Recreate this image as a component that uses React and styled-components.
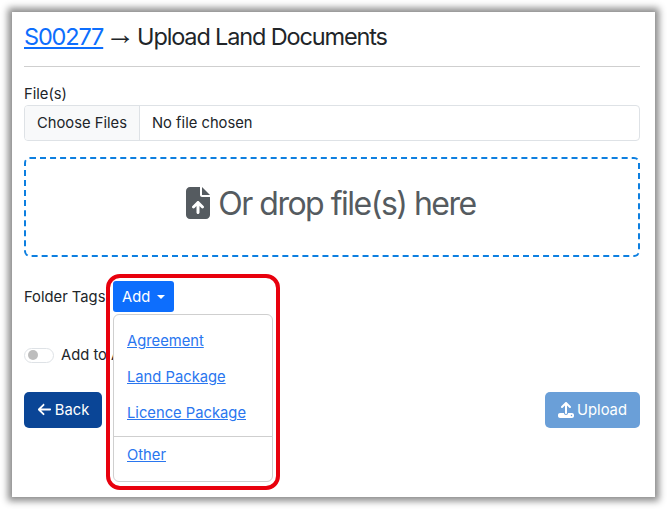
import React from 'react'
import styled, { createGlobalStyle } from 'styled-components'
import { FaArrowLeft, FaFileArrowUp, FaUpload } from 'react-icons/fa6'

const GlobalStyle = createGlobalStyle`
  html, body {
    margin: 0;
    background: #fff;
  }
  * {
    box-sizing: border-box;
  }
`

const App = () => {
  return (
    <Page>
      <GlobalStyle />
      <Panel>
        <Header>
          <TitleLink href="#">S00277</TitleLink>
          <Arrow>→</Arrow>
          Upload Land Documents
        </Header>
        <Body>
          <Label>File(s)</Label>
          <FileInput>
            <ChooseButton>Choose Files</ChooseButton>
            <FileName>No file chosen</FileName>
          </FileInput>
          <DropZone>
            <FaFileArrowUp size={32} />
            <span>Or drop file(s) here</span>
          </DropZone>
          <TagsRow>
            <TagsLabel>Folder Tags</TagsLabel>
            <AddMenu>
              <AddButton>
                Add
                <Caret />
              </AddButton>
              <Menu>
                <MenuLink href="#">Agreement</MenuLink>
                <MenuLink href="#">Land Package</MenuLink>
                <MenuLink href="#">Licence Package</MenuLink>
                <Divider />
                <MenuLink href="#">Other</MenuLink>
              </Menu>
              <Highlight />
            </AddMenu>
          </TagsRow>
          <SwitchRow>
            <Switch>
              <Knob />
            </Switch>
            <SwitchLabel>Add to A</SwitchLabel>
          </SwitchRow>
          <Actions>
            <BackButton>
              <FaArrowLeft size={15} />
              Back
            </BackButton>
            <UploadButton>
              <FaUpload size={16} />
              Upload
            </UploadButton>
          </Actions>
        </Body>
      </Panel>
    </Page>
  )
}

export default App

const Page = styled.div`
  width: 668px;
  height: 510px;
  padding: 12px 13px 13px 12px;
  font-family: Inter, "Liberation Sans", sans-serif;
  font-size: 14.75px;
  color: #212529;
  overflow: hidden;
`
const Panel = styled.div`
  width: 643px;
  height: 485px;
  background: #fff;
  box-shadow: 0 0 7px 4px #8a8a8a;
`
const Header = styled.div`
  height: 55px;
  margin: 0 15px 0 12px;
  padding-top: 10px;
  font-size: 23.5px;
  letter-spacing: -1.15px;
  line-height: 30px;
  border-bottom: 1px solid #cfcfcf;
`
const TitleLink = styled.a`
  color: #0d6efd;
  text-decoration: underline;
`
const Arrow = styled.span`
  margin: 0 3px 0 2px;
  font-family: "Liberation Serif", serif;
  font-size: 30px;
  line-height: 0;
  vertical-align: 1px;
`
const Body = styled.div`
  padding: 17px 15px 0 12px;
`
const Label = styled.div`
  height: 21px;
  line-height: 20px;
`
const FileInput = styled.div`
  display: flex;
  height: 36px;
  border: 1px solid #dee2e6;
  border-radius: 4px;
  overflow: hidden;
`
const ChooseButton = styled.div`
  display: flex;
  align-items: center;
  width: 115px;
  padding: 0 0 1px 12px;
  background: #f8f9fa;
  border-right: 1px solid #dee2e6;
`
const FileName = styled.div`
  display: flex;
  align-items: center;
  padding: 0 12px 1px;
`
const DropZone = styled.div`
  display: flex;
  align-items: center;
  justify-content: center;
  gap: 4px;
  height: 100px;
  margin-top: 16px;
  padding: 0 6px 8px 0;
  border: 2px dashed #0d7fe0;
  border-radius: 6px;
  color: #555b60;
  font-size: 32px;
  letter-spacing: -1.5px;
`
const TagsRow = styled.div`
  display: flex;
  align-items: center;
  gap: 8px;
  margin-top: 24px;
  height: 31px;
`
const TagsLabel = styled.div`
  width: 81px;
  line-height: 20px;
  white-space: nowrap;
`
const AddMenu = styled.div`
  position: relative;
`
const AddButton = styled.div`
  display: flex;
  align-items: center;
  gap: 7px;
  width: 61px;
  height: 31px;
  padding-left: 9px;
  background: #0d6efd;
  border-radius: 3px;
  color: #fff;
`
const Caret = styled.span`
  width: 0;
  height: 0;
  border-top: 4px solid #fff;
  border-left: 4px solid transparent;
  border-right: 4px solid transparent;
`
const Menu = styled.div`
  position: absolute;
  top: 33px;
  left: 0;
  z-index: 2;
  display: flex;
  flex-direction: column;
  align-items: flex-start;
  width: 160px;
  height: 168px;
  padding-top: 8px;
  background: #fff;
  border: 1px solid #cfcfcf;
  border-radius: 6px;
`
const MenuLink = styled.a`
  height: 36px;
  padding: 8px 0 0 13px;
  line-height: 20px;
  color: #2a76ef;
  text-decoration: underline;
`
const Divider = styled.div`
  width: 100%;
  height: 1px;
  margin-top: 5px;
  margin-bottom: 0;
  background: #cfcfcf;
`
const Highlight = styled.div`
  position: absolute;
  top: -7px;
  left: -7px;
  z-index: 3;
  width: 174px;
  height: 216px;
  border: 4px solid #e8000d;
  border-radius: 14px;
  pointer-events: none;
`
const SwitchRow = styled.div`
  display: flex;
  align-items: center;
  gap: 7px;
  margin-top: 27px;
  height: 32px;
`
const Switch = styled.div`
  display: flex;
  align-items: center;
  width: 30px;
  height: 15px;
  padding-left: 3px;
  border: 1px solid #dee2e6;
  border-radius: 8px;
`
const Knob = styled.div`
  width: 10px;
  height: 10px;
  border-radius: 50%;
  background: #bdbdbd;
`
const SwitchLabel = styled.div`
  line-height: 20px;
  white-space: nowrap;
`
const Actions = styled.div`
  display: flex;
  justify-content: space-between;
  margin-top: 21px;
`
const BackButton = styled.div`
  display: flex;
  align-items: center;
  justify-content: center;
  gap: 3px;
  width: 78px;
  height: 36px;
  padding-bottom: 1px;
  border-radius: 5px;
  background: #0a4596;
  color: #fff;
`
const UploadButton = styled(BackButton)`
  width: 95px;
  background: #6a9fd8;
`
